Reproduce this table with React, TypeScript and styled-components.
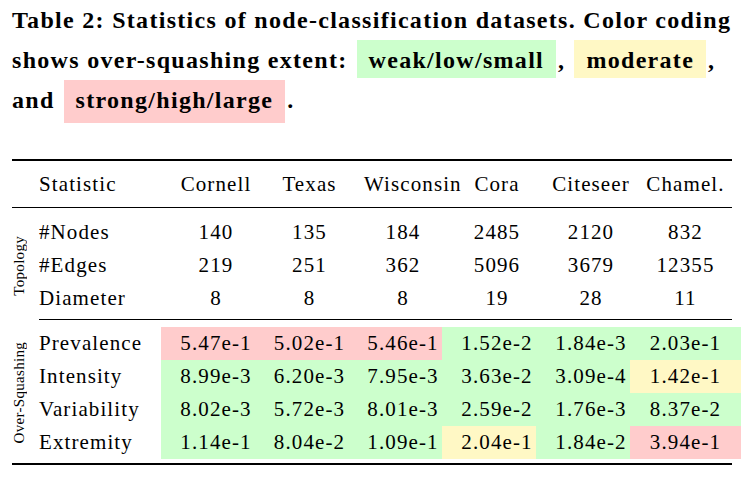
import React from "react";
import styled, { createGlobalStyle } from "styled-components";

const Global = createGlobalStyle`
  html, body { margin: 0; padding: 0; background: #fff; }
  body { font-family: "Liberation Serif", "Times New Roman", serif; color: #000; }
`;

const Page = styled.div`
  width: 750px;
  height: 479px;
  padding-left: 12px;
  box-sizing: border-box;
  overflow: hidden;
  font-family: "Liberation Serif", "Times New Roman", serif;
  color: #000;
`;

const Caption = styled.div`
  font-weight: 700;
  font-size: 24px;
  letter-spacing: 1.3px;
`;

const Line = styled.div`
  display: block;
  height: 40px;
  line-height: 40px;
  white-space: nowrap;
`;

const Mark = styled.span<{ $bg: string; $deep?: boolean }>`
  background: ${(p) => p.$bg};
  padding: 7px 12px ${(p) => (p.$deep ? "10px" : "5px")};
  margin-left: 9px;
  margin-right: 2px;
`;

const Table = styled.div`
  width: 729px;
  margin-top: 39px;
  font-size: 21px;
  letter-spacing: 1.1px;
`;

const Rule = styled.div<{ $weight: number; $inset?: number }>`
  height: ${(p) => p.$weight}px;
  background: #000;
  margin-left: ${(p) => p.$inset ?? 0}px;
  margin-right: 9px;
`;

const Section = styled.div<{ $top: number; $bottom: number }>`
  display: grid;
  grid-template-columns: 27px 122px 94px 93px 94px 94px 94px 111px;
  grid-auto-rows: 33px;
  padding-top: ${(p) => p.$top}px;
  padding-bottom: ${(p) => p.$bottom}px;
`;

const GroupLabel = styled.div<{ $rows: number }>`
  grid-column: 1;
  grid-row: 1 / span ${(p) => p.$rows};
  writing-mode: vertical-rl;
  transform: rotate(180deg);
  font-size: 15px;
  letter-spacing: 0.3px;
  line-height: 15px;
  justify-self: start;
  align-self: center;
  white-space: nowrap;
`;

const Name = styled.div`
  grid-column: 2;
  line-height: 33px;
  white-space: nowrap;
`;

const Cell = styled.div<{ $bg?: string; $last?: boolean }>`
  line-height: 33px;
  text-align: center;
  white-space: nowrap;
  background: ${(p) => p.$bg ?? "transparent"};
  padding-left: ${(p) => (p.$last ? "0" : "16px")};
`;

const RED = "#ffcccc";
const GREEN = "#ccffcc";
const YELLOW = "#fff8c5";

const datasets = ["Cornell", "Texas", "Wisconsin", "Cora", "Citeseer", "Chamel."];

const topology: [string, string[]][] = [
  ["#Nodes", ["140", "135", "184", "2485", "2120", "832"]],
  ["#Edges", ["219", "251", "362", "5096", "3679", "12355"]],
  ["Diameter", ["8", "8", "8", "19", "28", "11"]],
];

type C = "r" | "g" | "y";
const colorOf: Record<C, string> = { r: RED, g: GREEN, y: YELLOW };

const squash: [string, string[], C[]][] = [
  ["Prevalence", ["5.47e-1", "5.02e-1", "5.46e-1", "1.52e-2", "1.84e-3", "2.03e-1"], ["r", "r", "r", "g", "g", "g"]],
  ["Intensity", ["8.99e-3", "6.20e-3", "7.95e-3", "3.63e-2", "3.09e-4", "1.42e-1"], ["g", "g", "g", "g", "g", "y"]],
  ["Variability", ["8.02e-3", "5.72e-3", "8.01e-3", "2.59e-2", "1.76e-3", "8.37e-2"], ["g", "g", "g", "g", "g", "g"]],
  ["Extremity", ["1.14e-1", "8.04e-2", "1.09e-1", "2.04e-1", "1.84e-2", "3.94e-1"], ["g", "g", "g", "y", "g", "r"]],
];

export default function App() {
  return (
    <Page>
      <Global />
      <Caption>
        <Line>Table 2: Statistics of node-classification datasets. Color coding</Line>
        <Line>
          shows over-squashing extent:<Mark $bg={GREEN}>weak/low/small</Mark>,
          <Mark $bg={YELLOW}>moderate</Mark>,
        </Line>
        <Line>
          and<Mark $bg={RED} $deep>strong/high/large</Mark>.
        </Line>
      </Caption>
      <Table>
        <Rule $weight={2} />
        <Section $top={7} $bottom={6}>
          <Name>Statistic</Name>
          {datasets.map((d, i) => (
            <Cell key={d} $last={i === datasets.length - 1}>
              {d}
            </Cell>
          ))}
        </Section>
        <Rule $weight={1} />
        <Section $top={8} $bottom={4}>
          <GroupLabel $rows={3}>Topology</GroupLabel>
          {topology.map(([name, vals]) => (
            <React.Fragment key={name}>
              <Name>{name}</Name>
              {vals.map((v, i) => (
                <Cell key={i} $last={i === vals.length - 1}>
                  {v}
                </Cell>
              ))}
            </React.Fragment>
          ))}
        </Section>
        <Rule $weight={1} $inset={27} />
        <Section $top={7} $bottom={4}>
          <GroupLabel $rows={4}>Over-Squashing</GroupLabel>
          {squash.map(([name, vals, cols]) => (
            <React.Fragment key={name}>
              <Name>{name}</Name>
              {vals.map((v, i) => (
                <Cell key={i} $bg={colorOf[cols[i]]} $last={i === vals.length - 1}>
                  {v}
                </Cell>
              ))}
            </React.Fragment>
          ))}
        </Section>
        <Rule $weight={2} />
      </Table>
    </Page>
  );
}
